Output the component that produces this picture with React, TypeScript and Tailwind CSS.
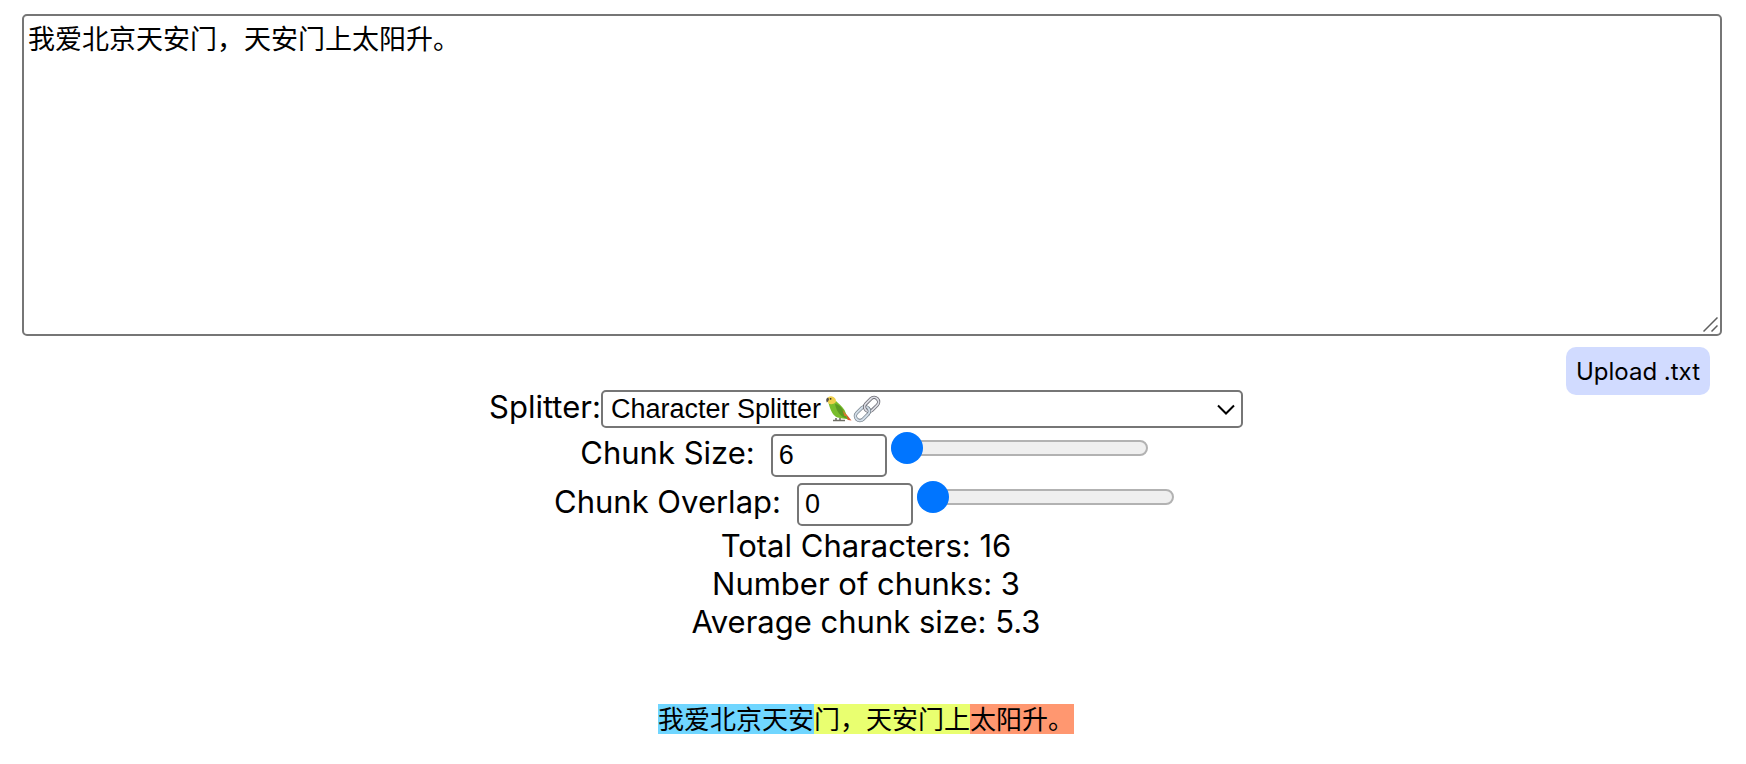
import { useId, useState } from "react";

const COLORS = ["bg-[#70d6ff]", "bg-[#e9ff70]", "bg-[#ff9770]"];

function splitText(text: string, size: number, overlap: number): string[] {
  const chars = Array.from(text);
  const step = Math.max(1, size - overlap);
  const chunks: string[] = [];
  for (let i = 0; i < chars.length; i += step) {
    chunks.push(chars.slice(i, i + size).join(""));
  }
  return chunks;
}

type SliderRowProps = {
  label: string;
  value: number;
  min: number;
  max: number;
  onChange: (value: number) => void;
};

function SliderRow({ label, value, min, max, onChange }: SliderRowProps) {
  const id = useId();
  return (
    <div className="flex h-[43px] items-start justify-center">
      <label htmlFor={id} className="mr-4 leading-[38px]">
        {label}
      </label>
      <input
        id={id}
        type="number"
        value={value}
        min={min}
        onChange={(e) => onChange(Number(e.target.value))}
        className="h-[43px] w-[116px] rounded-[5px] border-2 border-[#767676] bg-white px-[6px] font-['Liberation_Sans',sans-serif] text-[27px] [appearance:textfield] [&::-webkit-inner-spin-button]:appearance-none"
      />
      <input
        type="range"
        aria-label={label}
        value={value}
        min={min}
        max={max}
        onChange={(e) => onChange(Number(e.target.value))}
        className="mx-1 mt-[6px] h-4 w-[257px] appearance-none rounded-full border-2 border-[#b2b2b2] bg-[#efefef] [&::-webkit-slider-thumb]:-ml-[2px] [&::-webkit-slider-thumb]:size-8 [&::-webkit-slider-thumb]:appearance-none [&::-webkit-slider-thumb]:rounded-full [&::-webkit-slider-thumb]:bg-[#0075ff]"
      />
    </div>
  );
}

function ParrotIcon() {
  return (
    <svg width="28" height="28" viewBox="0 0 28 28" aria-hidden="true">
      <path d="M17 14 L26.5 25.5 L23 25 L15 18 Z" fill="#d9542b" />
      <path d="M8 25.5 H20 M11 23 V25.5 M15 23 V25.5" stroke="#6f6f66" strokeWidth="1.6" fill="none" />
      <path d="M3.5 8 C6 10 9 7 11 6 C13 8 17 11 19.5 15 C21 18 21.5 21 22.5 24 C19 23.5 16 23.5 12.5 22.5 C8 20.5 5.5 16 3.5 8 Z" fill="#79bd2b" />
      <path d="M10 9 C13 9 17 12 18.5 16 C19.5 19 21 21 22.5 24 C16 22 11.5 17 10 9 Z" fill="#5c9a22" />
      <path d="M17.5 15 L22 21 L19.5 21 Z" fill="#e8702e" />
      <path d="M2 4.5 C2.5 1.5 6 0.5 8.5 2 C11 3.5 11.5 6 10.5 7.5 C8.5 9.5 5.5 9.5 3.5 8.5 Z" fill="#efd04b" />
      <path d="M3 2.6 C1 3 0.8 5.5 1.8 7.6 C2.8 6.8 4 5.6 4 4 Z" fill="#55504a" />
      <circle cx="5.6" cy="3.8" r="0.9" fill="#3b2f1e" />
    </svg>
  );
}

function LinkIcon() {
  return (
    <svg width="28" height="28" viewBox="0 0 28 28" aria-hidden="true">
      <g fill="none" transform="rotate(-45 14 14)">
        <rect x="-0.5" y="9.5" width="16" height="9" rx="4.5" stroke="#77828c" strokeWidth="3.4" />
        <rect x="-0.5" y="9.5" width="16" height="9" rx="4.5" stroke="#d3dee9" strokeWidth="2" />
        <rect x="12.5" y="9.5" width="16" height="9" rx="4.5" stroke="#6b6b73" strokeWidth="3.4" />
        <rect x="12.5" y="9.5" width="16" height="9" rx="4.5" stroke="#dcdde4" strokeWidth="1.8" />
        <path d="M15.5 14 V14 C15.5 16.5 13.5 18.5 11 18.5" stroke="#77828c" strokeWidth="3.4" />
        <path d="M15.5 14 C15.5 16.5 13.5 18.5 11 18.5" stroke="#d3dee9" strokeWidth="2" />
      </g>
    </svg>
  );
}

export default function App() {
  const [text, setText] = useState("我爱北京天安门，天安门上太阳升。");
  const [size, setSize] = useState(6);
  const [overlap, setOverlap] = useState(0);
  const chunks = splitText(text, size, overlap);
  const total = Array.from(text).length;
  const average = chunks.length ? (total / chunks.length).toFixed(1) : "0";

  return (
    <main className="bg-white pt-[14px] font-[Inter,'Noto_Sans_CJK_SC',sans-serif] text-[31px] leading-[38px] text-black">
      <div className="pr-6 pl-[22px]">
        <div className="relative">
          <textarea
            aria-label="Text"
            value={text}
            onChange={(e) => setText(e.target.value)}
            className="block h-[322px] w-full resize-none rounded-[5px] border-2 border-[#767676] bg-white px-1 pt-[5px] font-['Liberation_Sans','Noto_Sans_CJK_SC',sans-serif] text-[27px] leading-[38px] outline-none"
          />
          <svg
            className="pointer-events-none absolute right-1 bottom-1"
            width="15"
            height="15"
            viewBox="0 0 15 15"
            aria-hidden="true"
          >
            <path d="M0.5 14.5 L14.5 0.5 M8.5 14.5 L14.5 8.5" stroke="#5f5f5f" strokeWidth="1.5" />
          </svg>
        </div>
      </div>
      <div className="grid grid-cols-1">
        <button
          type="button"
          className="col-start-1 row-start-1 mt-[11px] mr-9 h-12 w-36 self-start justify-self-end rounded-[10px] bg-[#d1dbff] pt-[2px] text-[24px] leading-8"
        >
          Upload .txt
        </button>
        <section className="col-start-1 row-start-1 mt-[54px] flex flex-col gap-[6px] justify-self-center pr-[14px]">
          <div className="flex items-center justify-center">
            <label htmlFor="splitter" className="-mt-1">
              Splitter:
            </label>
            <div className="relative">
              <select
                id="splitter"
                className="block h-[38px] w-[642px] appearance-none rounded-[5px] border-2 border-[#767676] bg-white px-2 font-['Liberation_Sans',sans-serif] text-[27px] leading-8"
              >
                <option>Character Splitter</option>
              </select>
              <span className="pointer-events-none absolute inset-y-0 left-56 flex items-center">
                <ParrotIcon />
                <LinkIcon />
              </span>
              <svg
                className="pointer-events-none absolute top-[14px] right-2"
                width="18"
                height="12"
                viewBox="0 0 18 12"
                aria-hidden="true"
              >
                <path d="M1 1.5 L9 9.5 L17 1.5" fill="none" stroke="#000" strokeWidth="2" />
              </svg>
            </div>
          </div>
          <SliderRow label="Chunk Size:" value={size} min={1} max={2000} onChange={setSize} />
          <SliderRow label="Chunk Overlap:" value={overlap} min={0} max={1000} onChange={setOverlap} />
        </section>
      </div>
      <section className="pt-px pr-[14px] text-center">
        <p>Total Characters: {total}</p>
        <p>Number of chunks: {chunks.length}</p>
        <p>Average chunk size: {average}</p>
      </section>
      <section className="flex justify-center pt-[63px] pr-[14px] pb-5 font-['Noto_Sans_CJK_SC',sans-serif] text-[26px] leading-7">
        {chunks.map((chunk, i) => (
          <span key={i} className={`pb-[2px] ${COLORS[i % COLORS.length]}`}>
            {chunk}
          </span>
        ))}
      </section>
    </main>
  );
}
